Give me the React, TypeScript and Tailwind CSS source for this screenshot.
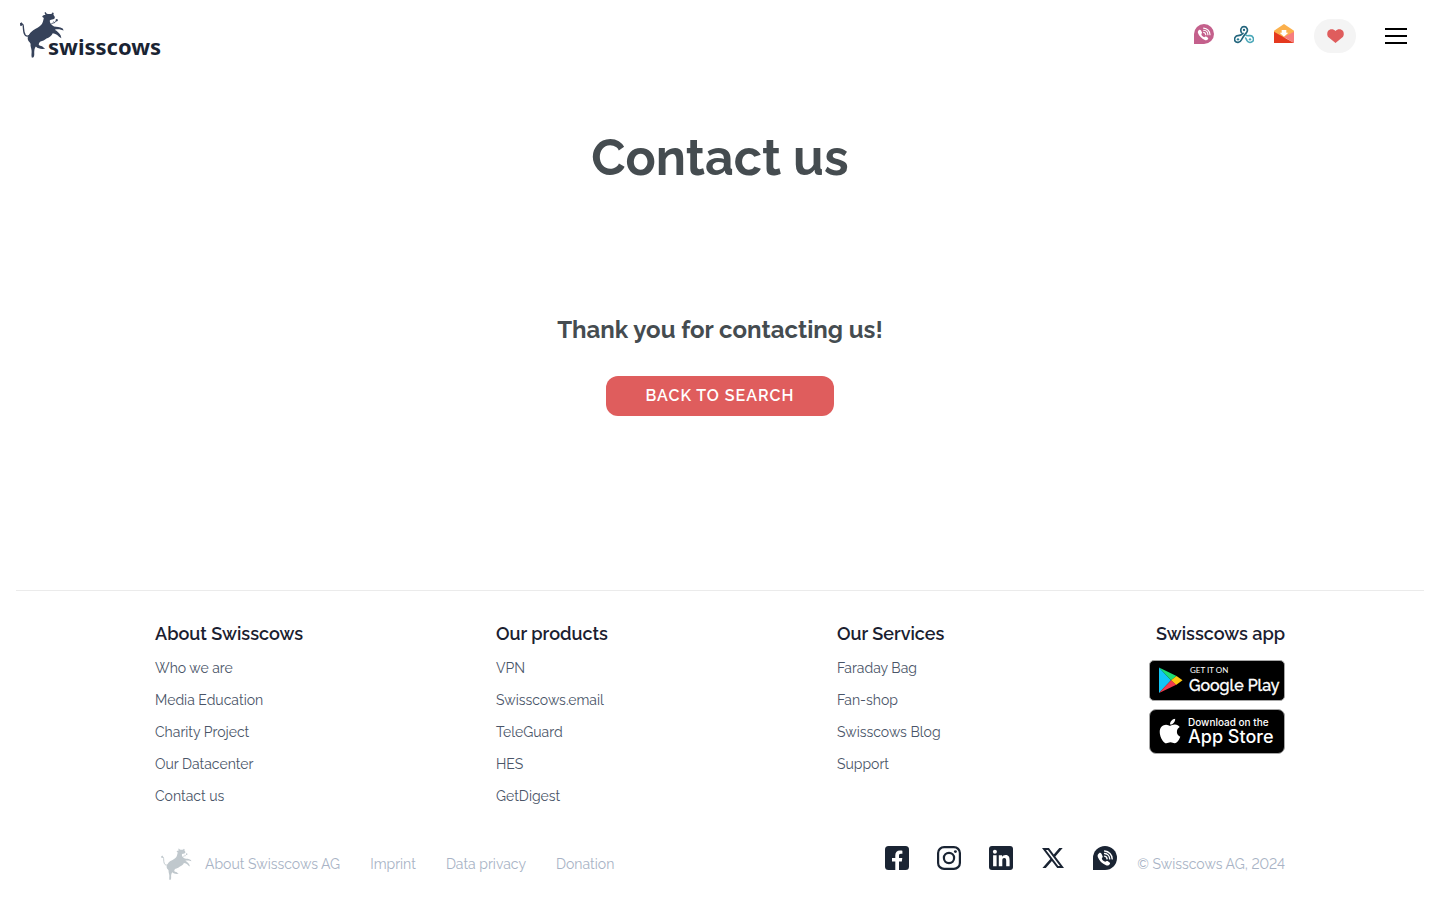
import React from "react";
import { FaApple } from "react-icons/fa";
import { BsTwitterX } from "react-icons/bs";

function Cow({ className }: { className: string }) {
  return (
    <svg viewBox="30 18 133 140" className={className} fill="currentColor" aria-hidden="true">
      <path
        d="M33 60C34 54 40 56 40 63C41 73 40 83 46 90C50 94 56 93 62 90"
        fill="none"
        stroke="currentColor"
        strokeWidth="4"
        strokeLinecap="round"
      />
      <path d="M29 55L35 51L38 57L33 63Z" />
      <path d="M55 93C58 86 64 79 70 75C80 69 90 65 95 58C99 53 100 46 102 38L97 34C99 30 103 29 107 29L104 22L107 20L111 25C116 26 121 26 126 25L129 21L132 24L131 28L135 34C136 38 134 41 130 42C126 43 122 43 120 46C119 53 125 60 133 64C141 66 150 64 159 70L162 76L154 74C148 72 141 72 135 74C142 78 149 84 153 91L155 99L148 95C144 88 137 86 129 84C126 92 118 97 110 100C105 105 98 108 92 109C88 112 86 117 87 120C92 124 97 122 101 127L106 131L97 132C90 130 83 130 78 124C74 129 73 136 73 142C73 148 74 152 71 157L66 158C63 151 66 143 65 136C64 129 61 123 62 117C62 112 55 110 54 104C53 99 53 96 55 93Z" />
      <path d="M125 55L135 52L140 46M135 52L131 49" stroke="currentColor" strokeWidth="2.500" fill="none" />
      <circle cx="141" cy="45" r="3.500" />
    </svg>
  );
}

function PhoneBubble({ className, hole }: { className: string; hole: string }) {
  return (
    <svg viewBox="0 0 24 24" className={className} aria-hidden="true">
      <path d="M0 24V12A12 12 0 1 1 12 24Z" fill="currentColor" />
      <g className={hole}>
        <path
          d="M6.100 7.200C7 6.500 8.100 7 8.600 8L9.500 9.900C9.900 10.800 9.500 11.400 8.800 12C8.900 14 10.700 15.500 12.400 15.800C13 15 13.700 14.600 14.600 15.100L16.300 16.200C17.200 16.800 17.300 17.500 16.700 18.300C15.900 19.400 14.500 19.900 13 19.200C9.200 17.600 6.100 14.500 4.800 10.900C4.300 9.400 4.900 8 6.100 7.200Z"
          fill="currentColor"
        />
        <path
          d="M11.600 10.100A3 3 0 0 1 14.100 12.900M11.600 7.500A5.500 5.500 0 0 1 16.700 12.900M11.600 5A8 8 0 0 1 19.200 12.900"
          fill="none"
          stroke="currentColor"
          strokeWidth="1.400"
          strokeLinecap="round"
        />
      </g>
    </svg>
  );
}

function VpnIcon() {
  return (
    <svg viewBox="0 0 60 60" className="size-5" fill="none" strokeWidth="5" strokeLinecap="round" aria-hidden="true">
      <path d="M22 25C18 17 22 8 30 8C39 8 43 18 38 25C30 34 26 40 22 48C18 57 7 57 3 51C-1 43 5 35 12 35C19 35 23 32 27 28" stroke="#23657d" />
      <path d="M36 33C37 36 42 35 48 35C57 35 61 45 57 51C52 57 43 57 39 50L35 42" stroke="#4aa7b8" />
      <circle cx="30" cy="18" r="3.500" fill="#23657d" />
      <circle cx="12" cy="46" r="3.500" fill="#267f96" />
      <circle cx="48" cy="46" r="3.500" fill="#4aa7b8" />
    </svg>
  );
}

function MailIcon() {
  return (
    <svg viewBox="0 0 60 60" className="size-5" aria-hidden="true">
      <path d="M30 0L60 20V30L30 42L0 30V20Z" fill="#fbb04c" />
      <path d="M23 18H37V26H43L30 38L17 26H23Z" fill="#fff" />
      <path d="M60 23V57L30 39Z" fill="#f77e7e" />
      <path d="M0 23L60 57H0Z" fill="#e5391f" />
    </svg>
  );
}

function Facebook() {
  return (
    <svg viewBox="0 0 24 24" className="size-6" aria-hidden="true">
      <rect width="24" height="24" rx="3.500" fill="currentColor" />
      <path
        d="M10.300 24V15.400H7V11.900H10.300V9.300C10.300 6.200 12.100 4.600 14.900 4.600C16.100 4.600 17.400 4.800 17.400 4.800V7.800H15.900C14.400 7.800 14 8.700 14 9.600V11.900H17.300L16.800 15.400H14V24Z"
        fill="#fff"
      />
    </svg>
  );
}

function Instagram() {
  return (
    <svg viewBox="0 0 24 24" className="size-6" fill="none" stroke="currentColor" strokeWidth="2.200" aria-hidden="true">
      <rect x="1.100" y="1.100" width="21.800" height="21.800" rx="6" />
      <circle cx="12" cy="12" r="5.100" />
      <circle cx="18.400" cy="5.600" r="1.450" fill="currentColor" stroke="none" />
    </svg>
  );
}

function LinkedIn() {
  return (
    <svg viewBox="0 0 24 24" className="size-6" aria-hidden="true">
      <rect width="24" height="24" rx="3" fill="currentColor" />
      <circle cx="5.900" cy="5.700" r="2" fill="#fff" />
      <path
        d="M4.100 9.200H7.600V20.200H4.100ZM9.800 9.200H13.100V10.700C13.600 9.800 14.800 8.900 16.500 8.900C20 8.900 20.600 11.200 20.600 14.200V20.200H17.200V14.900C17.200 13.600 17.100 12 15.300 12C13.500 12 13.300 13.400 13.300 14.800V20.200H9.800Z"
        fill="#fff"
      />
    </svg>
  );
}

function PlayBadge() {
  return (
    <svg viewBox="0 0 136 41" className="block h-[41px] w-[136px]" role="img" aria-label="Get it on Google Play">
      <rect x=".5" y=".5" width="135" height="40" rx="4.500" fill="#000" stroke="#a6a6a6" />
      <path d="M10 7.500V33L22 20.300Z" fill="#12c6f7" />
      <path d="M10 7.500L27.500 16L22 20.300Z" fill="#1ede76" />
      <path d="M27.500 16L33.500 20.300L27 25L22 20.300Z" fill="#ffc90e" />
      <path d="M10 33L22 20.300L27.300 24.800Z" fill="#f33b4d" />
      <text x="41" y="13" fill="#fff" fontFamily="Lato, sans-serif" fontSize="8">
        GET IT ON
      </text>
      <text x="40" y="31" fill="#fff" stroke="#fff" strokeWidth=".3" fontFamily="Raleway, Lato, sans-serif" fontSize="16" fontWeight="500">
        Google Play
      </text>
    </svg>
  );
}

function AppStoreBadge() {
  return (
    <svg viewBox="0 0 136 45" className="block h-[45px] w-[136px]" role="img" aria-label="Download on the App Store">
      <rect x=".5" y=".5" width="135" height="44" rx="6.500" fill="#000" stroke="#a6a6a6" />
      <FaApple x="7" y="8" size={28} color="#fff" />
      <text x="39" y="17" fill="#fff" fontFamily="Inter, sans-serif" fontSize="10" fontWeight="500">
        Download on the
      </text>
      <text x="39" y="34" fill="#fff" fontFamily="Inter, sans-serif" fontSize="18" fontWeight="500">
        App Store
      </text>
    </svg>
  );
}

const columns = [
  { title: "About Swisscows", links: ["Who we are", "Media Education", "Charity Project", "Our Datacenter", "Contact us"] },
  { title: "Our products", links: ["VPN", "Swisscows.email", "TeleGuard", "HES", "GetDigest"] },
  { title: "Our Services", links: ["Faraday Bag", "Fan-shop", "Swisscows Blog", "Support"] },
];

const socials = [
  { name: "Facebook", icon: <Facebook /> },
  { name: "Instagram", icon: <Instagram /> },
  { name: "LinkedIn", icon: <LinkedIn /> },
  { name: "X", icon: <BsTwitterX className="mx-px size-[22px]" /> },
  { name: "TeleGuard", icon: <PhoneBubble className="size-6" hole="text-white" /> },
];

export default function App() {
  return (
    <div className="flex min-h-screen flex-col bg-white font-['Raleway','Lato',sans-serif] text-[#454c50] lining-nums">
      <header className="flex h-[72px] items-center justify-between px-5">
        <a href="#" aria-label="Swisscows home" className="mb-1 flex h-12 items-end text-[#36425a]">
          <Cow className="h-[47px] w-[44px] shrink-0" />
          <span className="-ml-4 font-['Noto_Sans',sans-serif] text-[22px] leading-6 font-bold text-[#1a2433]">swisscows</span>
        </a>
        <nav className="flex items-center gap-5" aria-label="Services">
          <a href="#" aria-label="TeleGuard" className="-mt-1 text-[#c4608c]">
            <PhoneBubble className="size-5" hole="text-white" />
          </a>
          <a href="#" aria-label="VPN" className="-mt-1">
            <VpnIcon />
          </a>
          <a href="#" aria-label="Swisscows.email" className="-mt-1">
            <MailIcon />
          </a>
          <a href="#" aria-label="Donate" className="flex h-[34px] w-[42px] items-center justify-center rounded-full bg-[#f4f4f4]">
            <svg viewBox="0 0 17 14" className="h-[14px] w-[17px]" fill="#df5d5d" aria-hidden="true">
              <path d="M8.500 14L1.500 8.200C0 6.900-.2 3.900 1 2.100C2.700-.4 6.500-.5 8.500 2C10.500-.5 14.300-.4 16 2.100C17.200 3.900 17 6.900 15.500 8.200Z" />
            </svg>
          </a>
          <button type="button" aria-label="Menu" className="-ml-1 flex size-12 flex-col items-center justify-center gap-[5px]">
            <span className="h-0.5 w-[22px] bg-black" />
            <span className="h-0.5 w-[22px] bg-black" />
            <span className="h-0.5 w-[22px] bg-black" />
          </button>
        </nav>
      </header>

      <main className="flex flex-1 flex-col items-center px-4 pt-14 text-center">
        <h1 className="text-[50px] leading-[60px] font-bold">Contact us</h1>
        <h2 className="mt-[126px] text-2xl leading-8 font-bold">Thank you for contacting us!</h2>
        <button
          type="button"
          className="mt-[30px] h-10 rounded-xl bg-[#df5d5d] px-10 text-base font-semibold tracking-[1px] text-white"
        >
          BACK TO SEARCH
        </button>
      </main>

      <footer className="mx-4 border-t border-[#ebebeb] pt-[31px] pb-[18px]">
        <div className="mx-auto max-w-[1130px]">
          <div className="flex">
            <div className="grid flex-1 grid-cols-3 gap-[29px]">
              {columns.map((column) => (
                <section key={column.title}>
                  <h3 className="mb-2.5 text-lg leading-6 font-semibold text-[#1a202f]">{column.title}</h3>
                  <ul>
                    {column.links.map((link) => (
                      <li key={link} className="h-8 text-sm leading-6 text-[#4a5568]">
                        <a href="#">{link}</a>
                      </li>
                    ))}
                  </ul>
                </section>
              ))}
            </div>
            <section className="flex w-[136px] flex-col items-end">
              <h3 className="text-lg leading-6 font-semibold whitespace-nowrap text-[#1a202f]">Swisscows app</h3>
              <a href="#" className="mt-3.5">
                <PlayBadge />
              </a>
              <a href="#" className="mt-2">
                <AppStoreBadge />
              </a>
            </section>
          </div>

          <div className="mt-[30px] flex items-center text-sm leading-6 text-[#a8b3c5]">
            <Cow className="ml-1.5 h-8 w-[31px] text-[#c0c8cd]" />
            <nav className="ml-[13px] flex flex-1 gap-[30px]" aria-label="Legal">
              <a href="#">About Swisscows AG</a>
              <a href="#">Imprint</a>
              <a href="#">Data privacy</a>
              <a href="#">Donation</a>
            </nav>
            <div className="mr-5 flex items-center gap-7 pb-3 text-[#1a2433]">
              {socials.map((social) => (
                <a key={social.name} href="#" aria-label={social.name}>
                  {social.icon}
                </a>
              ))}
            </div>
            <span>© Swisscows AG, 2024</span>
          </div>
        </div>
      </footer>
    </div>
  );
}
